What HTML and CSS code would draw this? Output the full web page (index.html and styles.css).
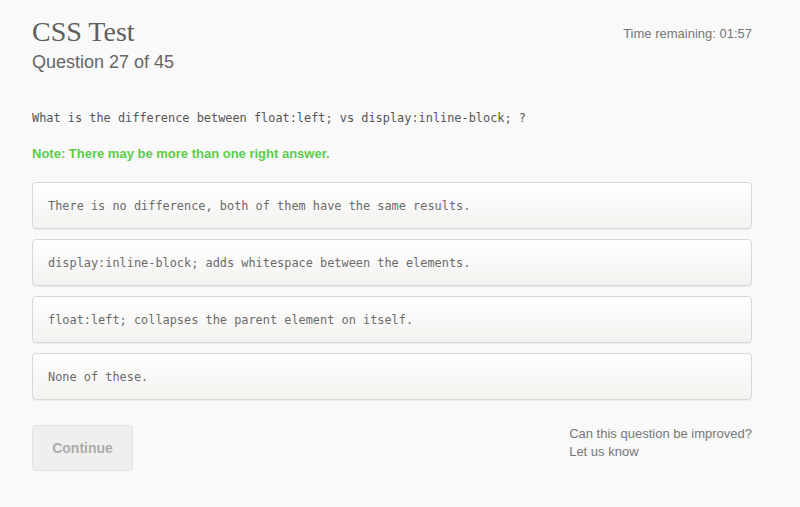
FILE: index.html
```html
<!DOCTYPE html>
<html>
<head>
<meta charset="utf-8">
<link rel="stylesheet" href="styles.css">
</head>
<body>
<div class="page">
  <header class="top">
    <div class="titles">
      <h1 class="title">CSS Test</h1>
      <div class="subtitle">Question 27 of 45</div>
    </div>
    <div class="timer">Time remaining: 01:57</div>
  </header>
  <p class="question">What is the difference between float:left; vs display:inline-block; ?</p>
  <p class="note">Note: There may be more than one right answer.</p>
  <div class="answers">
    <div class="answer">There is no difference, both of them have the same results.</div>
    <div class="answer">display:inline-block; adds whitespace between the elements.</div>
    <div class="answer">float:left; collapses the parent element on itself.</div>
    <div class="answer">None of these.</div>
  </div>
  <div class="bottom">
    <button class="continue">Continue</button>
    <div class="feedback">
      <div>Can this question be improved?</div>
      <div>Let us know</div>
    </div>
  </div>
</div>
</body>
</html>
```
FILE: styles.css
```css
html, body {
  margin: 0;
  padding: 0;
  background: #f9f9f9;
}
.page {
  padding: 16px 48px 0 32px;
  font-family: "Liberation Sans", Arial, sans-serif;
  color: #666;
}
.top {
  display: flex;
  justify-content: space-between;
  align-items: flex-start;
}
.title {
  margin: 0;
  font-family: "Liberation Serif", serif;
  font-weight: normal;
  font-size: 28px;
  line-height: 32px;
  color: #5f5f5f;
}
.subtitle {
  font-size: 18px;
  line-height: 24px;
  color: #666;
  margin-top: 2px;
}
.timer {
  font-size: 13px;
  color: #777;
  margin-top: 10px;
}
.question {
  margin: 36px 0 0;
  font-family: "DejaVu Sans Mono", "Liberation Mono", monospace;
  font-size: 11.9px;
  line-height: 16px;
  color: #555;
}
.note {
  margin: 20px 0 0;
  font-size: 13px;
  font-weight: bold;
  line-height: 16px;
  color: #5dcc48;
}
.answers {
  margin-top: 20px;
  display: flex;
  flex-direction: column;
  gap: 10px;
}
.answer {
  box-sizing: border-box;
  height: 47px;
  display: flex;
  align-items: center;
  padding: 0 15px;
  border: 1px solid #d6d6dc;
  border-radius: 4px;
  background: linear-gradient(#ffffff, #f3f2ef);
  box-shadow: 0 1px 1px rgba(0,0,0,0.06);
  font-family: "DejaVu Sans Mono", "Liberation Mono", monospace;
  font-size: 11.9px;
  color: #6b6b6b;
}
.bottom {
  margin-top: 25px;
  display: flex;
  justify-content: space-between;
  align-items: flex-start;
}
.continue {
  width: 101px;
  height: 46px;
  border: 1px solid #e2e2e2;
  border-radius: 4px;
  background: #efefef;
  font-family: "Liberation Sans", Arial, sans-serif;
  font-size: 14px;
  font-weight: bold;
  color: #ababab;
  padding: 0;
}
.feedback {
  font-size: 13px;
  line-height: 18px;
  color: #777;
}
```
